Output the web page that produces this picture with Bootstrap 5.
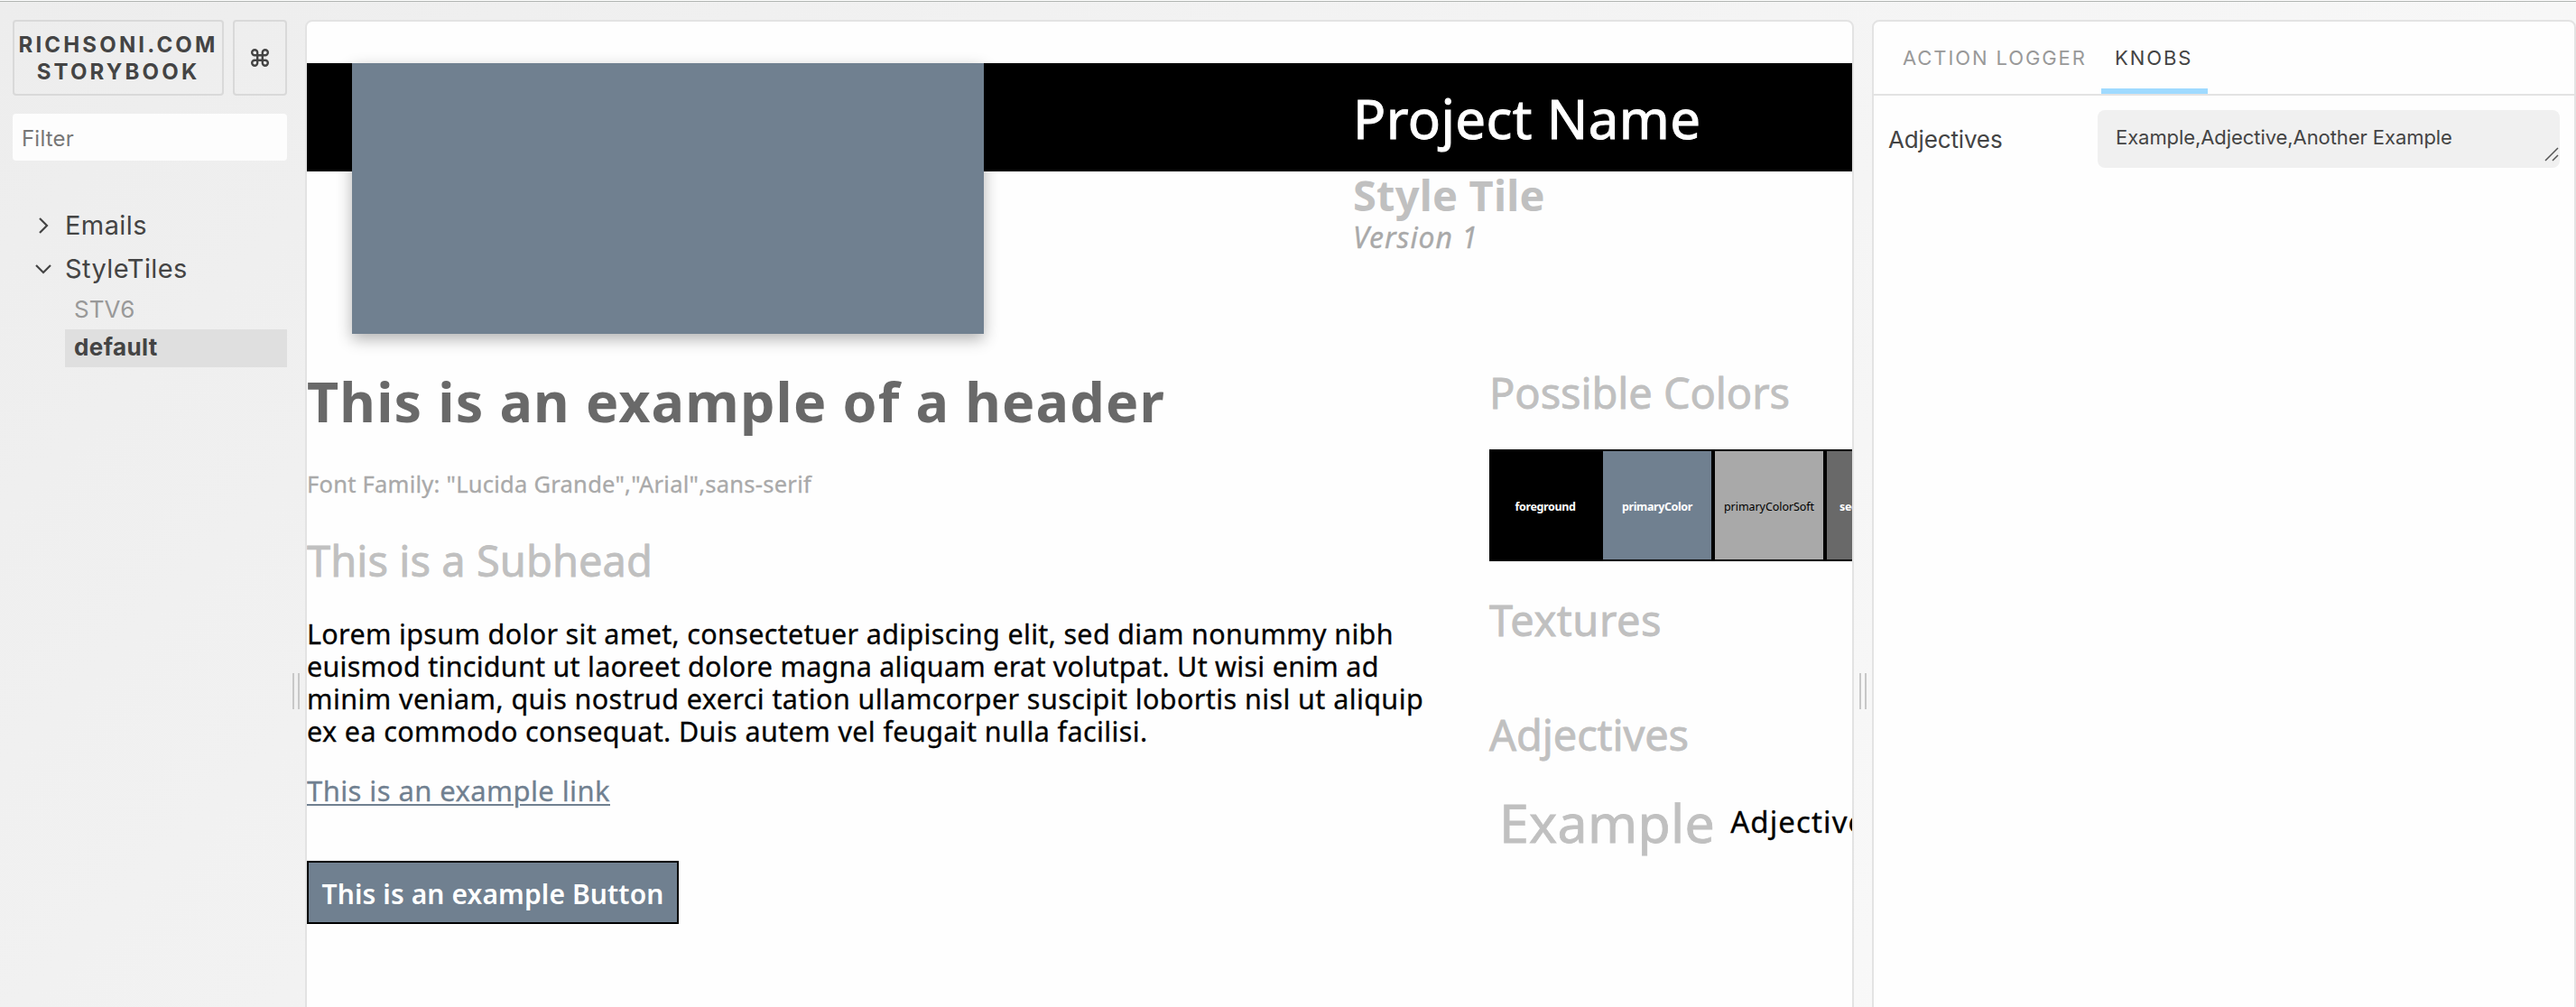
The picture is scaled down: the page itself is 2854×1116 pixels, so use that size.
<!DOCTYPE html>
<html lang="en">
<head>
<meta charset="utf-8">
<title>Storybook</title>
<link href="https://cdn.jsdelivr.net/npm/bootstrap@5.3.0/dist/css/bootstrap.min.css" rel="stylesheet">
<style>
body{width:2854px;height:1116px;overflow:hidden;font-family:Inter,sans-serif;color:#444;background:linear-gradient(135deg,#ededed,#f4f4f4 50%,#fbfbfb)}
.topline{height:2px;border-bottom:1px solid #b0b4b1}
.shell{padding-top:20px}
.sb-nav{width:318px;padding-left:14px}
.sb-btn{border:2px solid #d9d9d9;border-radius:4px;height:84px;font-weight:700;font-size:24px;line-height:30px;letter-spacing:3.17px}
.sb-title{width:234px;padding-top:2px}
.sb-key{width:60px}
.sb-filter{height:52px;margin-top:20px;border-radius:4px;font-size:24px;color:#777;padding:3px 0 0 10px;letter-spacing:.2px;background:#fdfdfd}
.tree{margin-top:48px}
.tree-item{height:48px;font-size:29px;padding-left:24px;letter-spacing:.4px}
.tree-item svg{width:20px;height:20px;margin-right:14px}
.leaf{height:42px;margin-left:58px;padding-left:10px;font-size:26px;line-height:42px;color:#999}
.leaf.picked{background:#dfdfdf;color:#444;font-weight:700;letter-spacing:.4px;line-height:40px;margin-top:1px}
.gutter{width:20px;padding-top:724px}
.grip{width:8px;height:40px;border-left:2px solid #c8c8c8;border-right:2px solid #c8c8c8;margin-left:6px}
.pane{border:2px solid #e3e3e3;border-radius:8px;background:#fefefe;height:1110px}
.preview{width:1716px;padding-top:46px;font-family:"Noto Sans",sans-serif;color:#000;white-space:nowrap;-webkit-text-stroke:.3px}
.band{height:120px;background:#000}
.hero{width:700px;height:300px;margin-left:50px;background:#708090;box-shadow:0 6px 16px rgba(0,0,0,.3)}
.names{margin-left:409px}
.p-name{font-size:60px;line-height:120px;color:#fff;padding-top:1px;height:120px;letter-spacing:.4px;-webkit-text-stroke:1px}
.p-tile{font-size:47px;line-height:52px;font-weight:700;color:#c0c0c0;letter-spacing:.2px;-webkit-text-stroke:0}
.p-ver{font-size:32px;line-height:41px;font-style:italic;color:#a9a9a9;letter-spacing:.96px}
.tile-left{width:1310px;padding-top:219px}
.tile-right{padding-top:217px}
.t-head{font-size:61px;line-height:72px;font-weight:700;color:#696969;letter-spacing:1.14px;-webkit-text-stroke:0}
.t-fam{font-size:25.5px;line-height:30px;margin-top:40px;color:#a9a9a9;letter-spacing:.25px}
.t-sub{font-size:47px;line-height:56px;color:#c0c0c0;-webkit-text-stroke:.8px}
.t-left-sub{margin-top:42px;letter-spacing:.05px}
.t-colors{letter-spacing:-.1px}
.t-textures{margin-top:37px;letter-spacing:.52px}
.t-adjectives{margin-top:71px;letter-spacing:-.11px}
.t-body{font-size:30.5px;line-height:36px;margin-top:35px}
.ln-1{letter-spacing:.33px}.ln-2{letter-spacing:.26px}.ln-3{letter-spacing:.41px}.ln-4{letter-spacing:.39px}
.t-link{font-size:31px;line-height:36px;margin-top:30px;color:#708090;letter-spacing:.4px;text-underline-offset:3px;text-decoration-thickness:2px}
.t-btn{height:70px;width:412px;border:2px solid #000;background:#708090;color:#fff;font-weight:600;font-size:30px;margin-top:60px;border-radius:0;letter-spacing:.1px;-webkit-text-stroke:0;padding:3px 0 0}
.swatches{margin-top:35px}
.sw{width:124px;height:124px;border:2px solid #000;font-size:12.5px;color:#fff;font-weight:700;letter-spacing:-.38px;-webkit-text-stroke:0;padding-top:4px}
.sw-fg{background:#000}
.sw-primary{background:#708090}
.sw-soft{background:#a9a9a9;color:#000;font-weight:400;letter-spacing:-.06px}
.sw-second{background:#696969}
.adj-row{margin:33px 0 0 11px}
.adj-big{font-size:59px;line-height:72px;color:#c0c0c0;letter-spacing:.3px;-webkit-text-stroke:.8px}
.adj-sm{font-size:33px;margin-left:17px;letter-spacing:1.1px}
.knobs{width:780px}
.tabs-row{height:82px;border-bottom:2px solid #e3e3e3;padding-left:16px;font-size:22px;letter-spacing:1.9px}
.tab-x{padding:0 16px;height:80px;line-height:80px;color:#999;width:236px;white-space:nowrap}
.tab-x.on{color:#444;border-bottom:6px solid #9fdaff;width:118px;padding-left:15px}
.knob-row{padding-top:16px}
.k-label{width:248px;padding-left:16px;font-size:26px;letter-spacing:-.15px}
.k-area{width:512px;height:64px;border-radius:8px;background:#f0f0f0;font-size:22px;padding:0 0 3px 20px;letter-spacing:-.07px}
.k-grip{width:16px;height:16px;margin:0 1px 4px auto}
</style>
</head>
<body>
<div class="topline bg-white"></div>
<div class="shell d-flex align-items-start">
  <aside class="sb-nav">
    <div class="d-flex justify-content-between text-center">
      <div class="sb-btn sb-title d-flex flex-column justify-content-center align-items-center"><span>RICHSONI.COM</span><span>STORYBOOK</span></div>
      <div class="sb-btn sb-key d-flex justify-content-center align-items-center"><svg width="20" height="20" viewBox="0 0 20 20" fill="none" stroke="#444" stroke-width="2.4"><path d="M7.2 7.2V4.2a3 3 0 1 0-3 3h11.6a3 3 0 1 0-3-3v11.6a3 3 0 1 0 3-3H4.2a3 3 0 1 0 3 3z"/></svg></div>
    </div>
    <div class="sb-filter d-flex align-items-center">Filter</div>
    <div class="tree">
      <div class="tree-item d-flex align-items-center"><svg viewBox="0 0 20 20" fill="none" stroke="#444" stroke-width="2.2"><path d="M6 2l8 8-8 8"/></svg>Emails</div>
      <div class="tree-item d-flex align-items-center"><svg viewBox="0 0 20 20" fill="none" stroke="#444" stroke-width="2.2"><path d="M2 6l8 8 8-8"/></svg>StyleTiles</div>
      <div class="leaf">STV6</div>
      <div class="leaf picked">default</div>
    </div>
  </aside>
  <div class="gutter"><div class="grip"></div></div>
  <main class="pane preview overflow-hidden">
    <div class="band d-flex align-items-start">
      <div class="hero flex-shrink-0"></div>
      <div class="names">
        <div class="p-name">Project Name</div>
        <div class="p-tile">Style Tile</div>
        <div class="p-ver">Version 1</div>
      </div>
    </div>
    <div class="d-flex">
      <div class="tile-left flex-shrink-0">
        <div class="t-head">This is an example of a header</div>
        <div class="t-fam">Font Family: "Lucida Grande","Arial",sans-serif</div>
        <div class="t-sub t-left-sub">This is a Subhead</div>
        <div class="t-body">
          <div class="ln-1">Lorem ipsum dolor sit amet, consectetuer adipiscing elit, sed diam nonummy nibh</div>
          <div class="ln-2">euismod tincidunt ut laoreet dolore magna aliquam erat volutpat. Ut wisi enim ad</div>
          <div class="ln-3">minim veniam, quis nostrud exerci tation ullamcorper suscipit lobortis nisl ut aliquip</div>
          <div class="ln-4">ex ea commodo consequat. Duis autem vel feugait nulla facilisi.</div>
        </div>
        <a class="t-link d-block" href="#">This is an example link</a>
        <button class="t-btn btn d-flex align-items-center justify-content-center">This is an example Button</button>
      </div>
      <div class="tile-right flex-shrink-0">
        <div class="t-sub t-colors">Possible Colors</div>
        <div class="swatches d-flex">
          <div class="sw sw-fg flex-shrink-0 d-flex align-items-center justify-content-center">foreground</div>
          <div class="sw sw-primary flex-shrink-0 d-flex align-items-center justify-content-center">primaryColor</div>
          <div class="sw sw-soft flex-shrink-0 d-flex align-items-center justify-content-center">primaryColorSoft</div>
          <div class="sw sw-second flex-shrink-0 d-flex align-items-center justify-content-center">secondaryColor</div>
        </div>
        <div class="t-sub t-textures">Textures</div>
        <div class="t-sub t-adjectives">Adjectives</div>
        <div class="adj-row d-flex align-items-center"><div class="adj-big">Example</div><div class="adj-sm">Adjective</div></div>
      </div>
    </div>
  </main>
  <div class="gutter"><div class="grip"></div></div>
  <section class="pane knobs">
    <div class="tabs-row d-flex"><div class="tab-x">ACTION LOGGER</div><div class="tab-x on">KNOBS</div></div>
    <div class="knob-row d-flex align-items-center">
      <div class="k-label">Adjectives</div>
      <div class="k-area d-flex align-items-center">Example,Adjective,Another Example<svg class="k-grip align-self-end" viewBox="0 0 16 16" stroke="#555" stroke-width="1.5"><path d="M1 15L15 1M9 15l6-6"/></svg></div>
    </div>
  </section>
</div>
<script src="https://cdn.jsdelivr.net/npm/bootstrap@5.3.0/dist/js/bootstrap.bundle.min.js"></script>
</body>
</html>
